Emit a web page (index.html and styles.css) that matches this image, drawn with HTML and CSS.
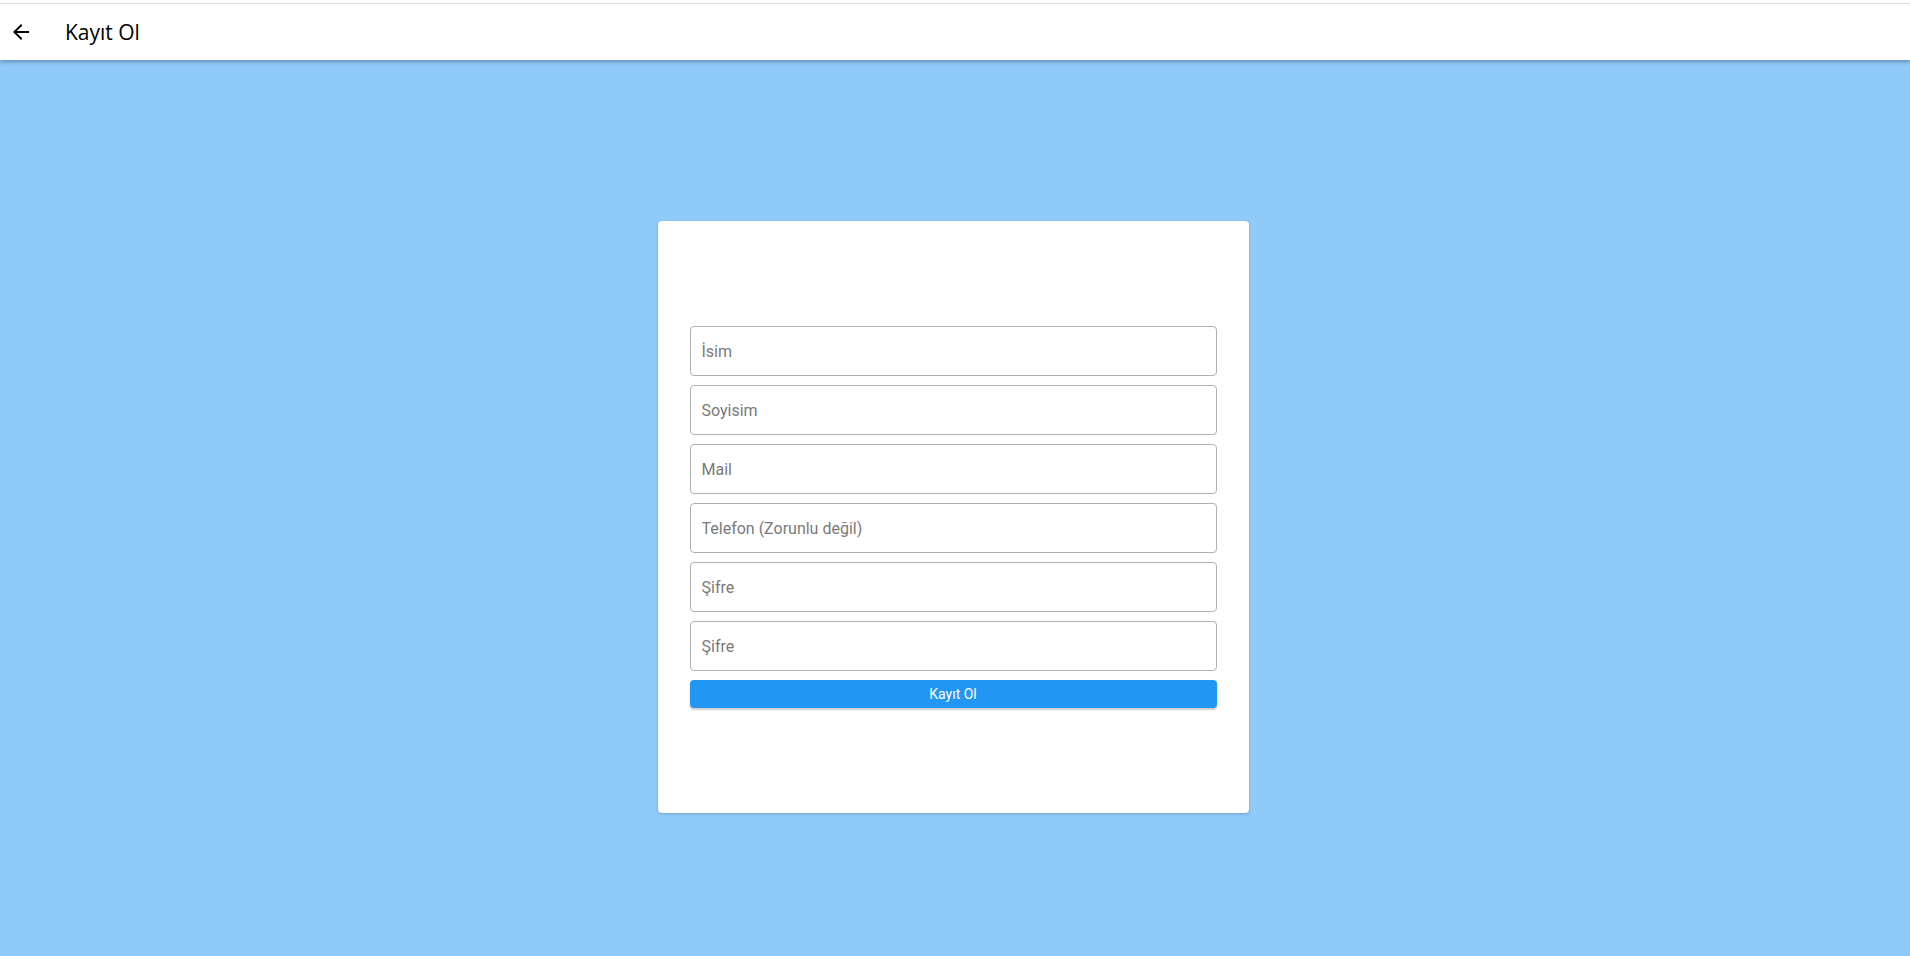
FILE: index.html
```html
<!DOCTYPE html>
<html lang="tr">
<head>
    <meta charset="UTF-8">
    <meta name="viewport" content="width=device-width, initial-scale=1.0">
    <title>Kayıt Ol</title>
    <link rel="stylesheet" href="styles.css">
</head>
<body>
    <header class="app-bar">
        <button class="back-btn" type="button" aria-label="Geri">
            <svg width="24" height="24" viewBox="0 0 24 24">
                <path d="M20 11H7.83l5.59-5.59L12 4l-8 8 8 8 1.41-1.41L7.83 13H20v-2z" fill="#000"/>
            </svg>
        </button>
        <h1 class="app-title">Kayıt Ol</h1>
    </header>
    <main class="page">
        <div class="card">
            <form class="register-form">
                <input class="field" type="text" placeholder="İsim">
                <input class="field" type="text" placeholder="Soyisim">
                <input class="field" type="email" placeholder="Mail">
                <input class="field" type="tel" placeholder="Telefon (Zorunlu değil)">
                <input class="field" type="password" placeholder="Şifre">
                <input class="field" type="password" placeholder="Şifre">
                <button class="submit-btn" type="submit">Kayıt Ol</button>
            </form>
        </div>
    </main>
</body>
</html>
```

FILE: styles.css
```css
html, body {
    margin: 0;
    padding: 0;
    height: 100%;
}
body {
    font-family: Roboto, "Liberation Sans", sans-serif;
    background-color: #90caf9;
    display: flex;
    flex-direction: column;
    overflow: hidden;
}
.app-bar {
    height: 56px;
    flex-shrink: 0;
    background-color: #fff;
    border-top: 3px solid #fff;
    box-shadow: inset 0 1px 0 #dcdcdc, 0 2px 4px rgba(0,0,0,0.3);
    display: flex;
    align-items: center;
    padding: 1px 0 0 9px;
    position: relative;
    z-index: 1;
}
.back-btn {
    width: 24px;
    height: 24px;
    padding: 0;
    border: none;
    background: none;
    display: flex;
}
.app-title {
    margin: 0 0 0 32px;
    font-family: "Open Sans", "Noto Sans", sans-serif;
    font-size: 21px;
    font-weight: 500;
    color: #000;
}
.page {
    flex: 1;
    display: flex;
    justify-content: center;
    align-items: flex-start;
    padding: 161px 4px 0 0;
}
.card {
    width: 591px;
    height: 592px;
    box-sizing: border-box;
    padding: 0 32px;
    background-color: #fff;
    border-radius: 4px;
    box-shadow: 0 1px 3px rgba(0,0,0,0.2);
    display: flex;
    flex-direction: column;
    justify-content: center;
}
.register-form {
    display: flex;
    flex-direction: column;
    gap: 9px;
}
.field {
    height: 50px;
    box-sizing: border-box;
    border: 1px solid #b0b0b0;
    border-radius: 4px;
    padding: 0 11px;
    font-family: Roboto, "Liberation Sans", sans-serif;
    font-size: 16px;
    color: #212121;
    outline: none;
}
.field::placeholder {
    color: #7a7a7a;
}
.submit-btn {
    height: 28px;
    border: none;
    border-radius: 4px;
    background-color: #2196f3;
    color: #fff;
    font-family: Roboto, "Liberation Sans", sans-serif;
    font-size: 14px;
    font-weight: 400;
    box-shadow: 0 2px 2px rgba(0,0,0,0.2);
    cursor: pointer;
}
```
